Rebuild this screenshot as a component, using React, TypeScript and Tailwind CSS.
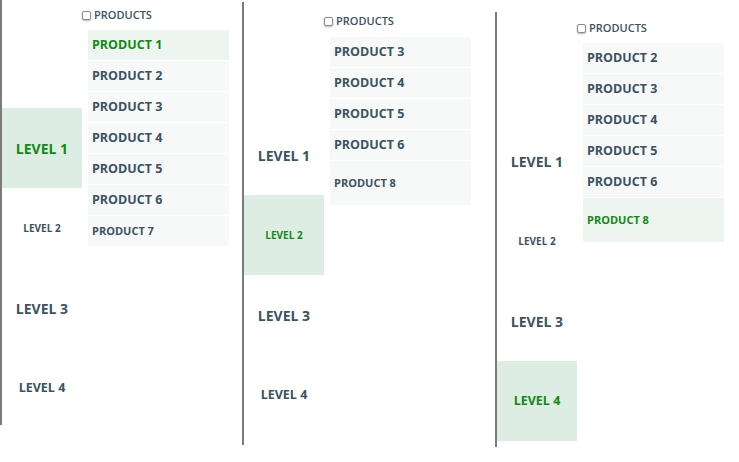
type Product = { name: string; active?: boolean; tall?: boolean; small?: boolean };

type Panel = {
  frame: string;
  header: string;
  rows: string;
  levels: string;
  activeLevel: number;
  products: Product[];
};

const panels: Panel[] = [
  {
    frame: "mt-0 h-[425px] ml-0",
    header: "pt-[8px]",
    rows: "mt-[8px]",
    levels: "pt-[108px]",
    activeLevel: 1,
    products: [
      { name: "PRODUCT 1", active: true },
      { name: "PRODUCT 2" },
      { name: "PRODUCT 3" },
      { name: "PRODUCT 4" },
      { name: "PRODUCT 5" },
      { name: "PRODUCT 6" },
      { name: "PRODUCT 7", small: true },
    ],
  },
  {
    frame: "mt-[2px] h-[443px] ml-[13px]",
    header: "pt-[12px]",
    rows: "mt-[9px]",
    levels: "pt-[113px]",
    activeLevel: 2,
    products: [
      { name: "PRODUCT 3" },
      { name: "PRODUCT 4" },
      { name: "PRODUCT 5" },
      { name: "PRODUCT 6" },
      { name: "PRODUCT 8", small: true, tall: true },
    ],
  },
  {
    frame: "mt-[12px] h-[435px] ml-[24px]",
    header: "pt-[9px]",
    rows: "mt-[8px]",
    levels: "pt-[109px]",
    activeLevel: 4,
    products: [
      { name: "PRODUCT 2" },
      { name: "PRODUCT 3" },
      { name: "PRODUCT 4" },
      { name: "PRODUCT 5" },
      { name: "PRODUCT 6" },
      { name: "PRODUCT 8", small: true, tall: true, active: true },
    ],
  },
];

const levelText: Record<number, string> = {
  1: "text-[14px] font-bold",
  2: "text-[10px] font-bold",
  3: "text-[14px] font-bold",
  4: "text-[12.5px] font-bold",
};

function Levels({ active, className }: { active: number; className: string }) {
  return (
    <div className={`w-[80px] shrink-0 ${className}`}>
      {[1, 2, 3, 4].map((n) => (
        <div
          key={n}
          className={`flex h-[80px] items-center justify-center ${levelText[n]} ${
            n === active ? "bg-[#deede3] text-[#108a12]" : "text-[#3a5361]"
          }`}
        >
          LEVEL {n}
        </div>
      ))}
    </div>
  );
}

function ProductRow({ p }: { p: Product }) {
  return (
    <div
      className={`flex items-center pl-[4px] ${p.tall ? "h-[44px]" : "h-[30px]"} ${
        p.small ? "text-[11px] font-bold" : "text-[12.5px] font-bold"
      } ${p.active ? "bg-[#eef5f0] text-[#108a12]" : "bg-[#f6f9f8] text-[#3a5361]"}`}
    >
      {p.name}
    </div>
  );
}

export default function App() {
  return (
    <div className="flex h-[462px] w-[739px] items-start overflow-hidden bg-white font-['Open_Sans','Liberation_Sans',sans-serif]">
      {panels.map((panel, i) => (
        <div key={i} className={`flex shrink-0 border-l-2 border-[#7b7b7b] ${panel.frame}`}>
          <Levels active={panel.activeLevel} className={panel.levels} />
          <div className={`w-[147px] shrink-0 ${panel.header}`}>
            <div className="flex h-[14px] items-center gap-[3px] text-[11px] font-semibold text-[#3a5361]">
              <span className="h-[9px] w-[9px] rounded-[2px] border border-[#8a8a8a] bg-white shadow-[0_1px_2px_rgba(0,0,0,0.3)]" />
              PRODUCTS
            </div>
            <div className={`ml-[6px] flex w-[141px] flex-col gap-[1px] ${panel.rows}`}>
              {panel.products.map((p) => (
                <ProductRow key={p.name} p={p} />
              ))}
            </div>
          </div>
        </div>
      ))}
    </div>
  );
}
